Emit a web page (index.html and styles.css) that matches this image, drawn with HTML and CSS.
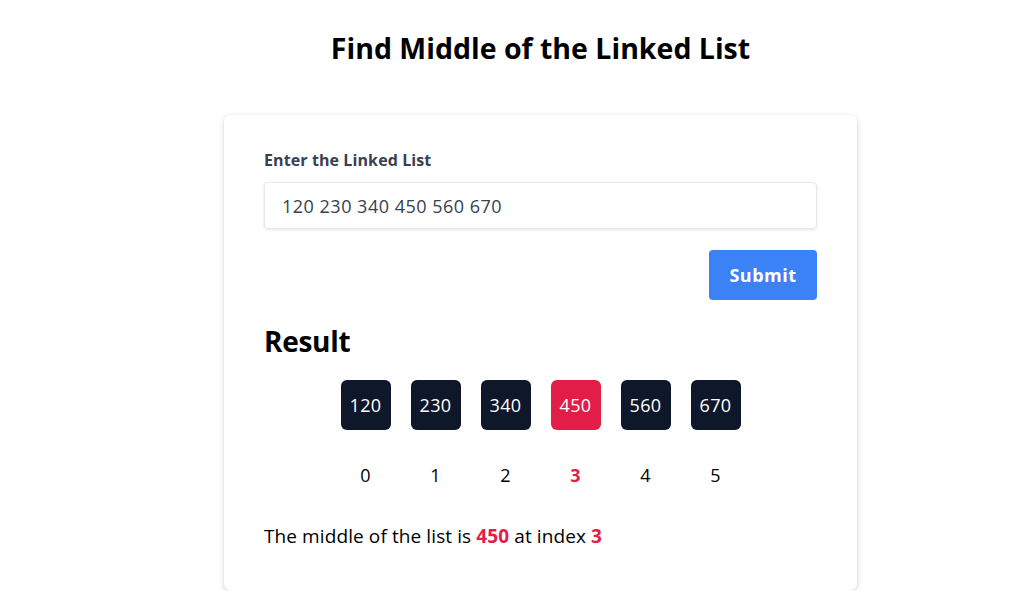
FILE: index.html
```html
<!DOCTYPE html>
<html>
<head>
<meta charset="utf-8">
<link rel="stylesheet" href="styles.css">
</head>
<body>
<div class="page">
  <h1 class="title">Find Middle of the Linked List</h1>
  <div class="card">
    <label class="label">Enter the Linked List</label>
    <div class="input">120 230 340 450 560 670</div>
    <div class="actions"><button class="btn">Submit</button></div>
    <h2 class="result">Result</h2>
    <div class="nodes">
      <div class="node">120</div>
      <div class="node">230</div>
      <div class="node">340</div>
      <div class="node mid">450</div>
      <div class="node">560</div>
      <div class="node">670</div>
    </div>
    <div class="indices">
      <div class="idx">0</div>
      <div class="idx">1</div>
      <div class="idx">2</div>
      <div class="idx mid">3</div>
      <div class="idx">4</div>
      <div class="idx">5</div>
    </div>
    <p class="summary">The middle of the list is <b class="hl">450</b> at index <b class="hl">3</b></p>
  </div>
</div>
</body>
</html>
```
FILE: styles.css
```css
* { box-sizing: border-box; }
html, body { margin: 0; padding: 0; background: #fff; }
body { font-family: "Open Sans", "Noto Sans", sans-serif; color: #000; }
.page { width: 633px; margin-left: 224px; padding-top: 28px; }
.title { margin: 0; text-align: center; font-size: 28.5px; font-weight: 700; line-height: 40px; }
.card { margin-top: 47px; background: #fff; border-radius: 6px; box-shadow: 0 2px 6px rgba(0,0,0,0.15), 0 1px 3px rgba(0,0,0,0.06); padding: 34px 40px 40px; }
.label { display: block; font-size: 16px; font-weight: 700; color: #374151; line-height: 22px; letter-spacing: 0.1px; }
.input { margin-top: 11px; height: 47px; border: 1px solid #e5e7eb; border-radius: 4px; box-shadow: 0 1px 3px rgba(0,0,0,0.1); padding: 0 17px; display: flex; align-items: center; font-size: 18px; color: #374151; letter-spacing: 0.5px; }
.actions { display: flex; justify-content: flex-end; margin-top: 21px; }
.btn { width: 108px; height: 50px; border: 0; border-radius: 4px; background: #3b82f6; color: #fff; font-family: inherit; font-size: 18px; font-weight: 700; letter-spacing: 0.5px; }
.result { margin: 23px 0 0; font-size: 28px; font-weight: 700; line-height: 36px; letter-spacing: -0.3px; }
.nodes, .indices { display: flex; justify-content: center; gap: 20px; }
.nodes { margin-top: 21px; }
.node { width: 50px; height: 50px; border-radius: 6px; background: #0f172a; color: #fff; display: flex; align-items: center; justify-content: center; font-size: 18px; letter-spacing: 0.3px; }
.node.mid { background: #e11d48; }
.indices { margin-top: 33px; }
.idx { width: 50px; text-align: center; font-size: 18px; line-height: 24px; }
.idx.mid { color: #e11d48; font-weight: 700; }
.summary { margin: 35px 0 0; font-size: 19px; line-height: 28px; letter-spacing: 0.1px; }
.hl { color: #e11d48; font-weight: 700; }
```
